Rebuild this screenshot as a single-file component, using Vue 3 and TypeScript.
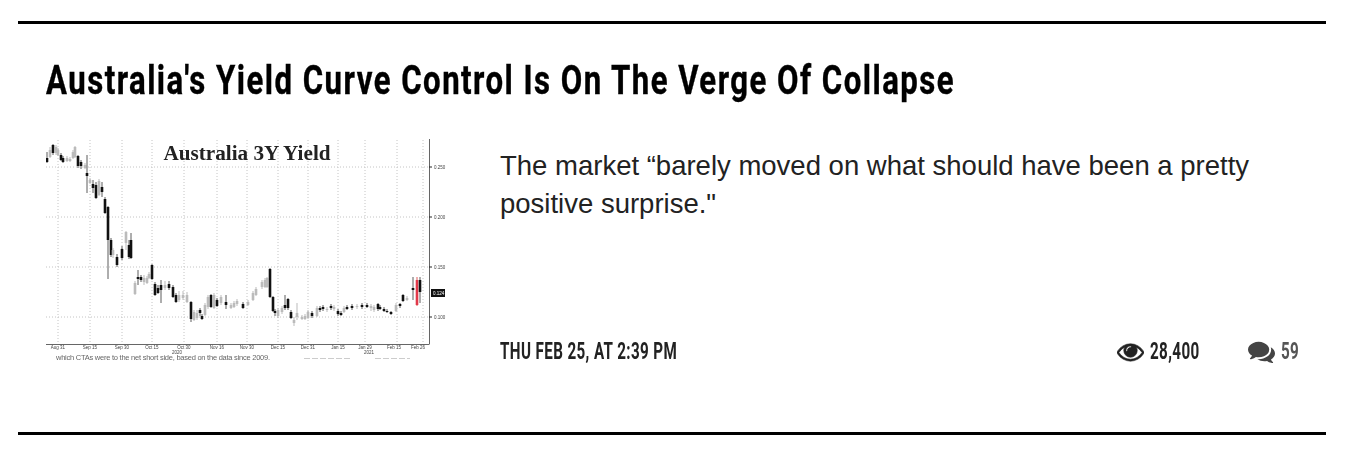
<template>
  <div class="page">
    <article class="post">
      <h2 class="title">Australia's Yield Curve Control Is On The Verge Of Collapse</h2>
      <div class="row">
        <svg class="chart" viewBox="46 139 400 222" width="400" height="222" xmlns="http://www.w3.org/2000/svg">
          <g class="grid">
            <line v-for="y in gridY" :key="'h' + y" x1="46" x2="429" :y1="y" :y2="y" />
            <line v-for="x in gridX" :key="'v' + x" :x1="x" :x2="x" y1="140" y2="344" />
          </g>
          <text x="247" y="159.5" text-anchor="middle" class="chart-title">Australia 3Y Yield</text>
          <g v-for="(c, i) in candles" :key="i">
            <line :x1="c.x" :x2="c.x" :y1="c.wt" :y2="c.wb" :stroke="c.kind === 'd' ? '#333' : c.kind === 'r' ? '#d33' : '#aaa'" stroke-width="0.8" />
            <rect :x="c.x - 1.3" :y="c.top" width="2.6" :height="c.bot - c.top" :fill="c.kind === 'd' ? '#111' : c.kind === 'r' ? '#e2394a' : '#bbb'" />
          </g>
          <line class="axis" x1="429.5" x2="429.5" y1="139" y2="344" />
          <line class="axis" x1="46" x2="429.5" y1="344.5" y2="344.5" />
          <g v-for="t in ticks" :key="t">
            <line x1="429" x2="432" :y1="tickY[t]" :y2="tickY[t]" stroke="#222" />
            <text x="434" :y="tickY[t] + 2" class="tick">{{ t }}</text>
          </g>
          <rect x="431" y="289" width="14" height="8" fill="#111" />
          <text x="433" y="295" class="tick last">0.124</text>
          <text v-for="d in dates" :key="d.t" :x="d.x" y="349" text-anchor="middle" class="tick">{{ d.t }}</text>
          <text x="177" y="354" text-anchor="middle" class="tick">2020</text>
          <text x="369" y="354" text-anchor="middle" class="tick">2021</text>
          <text x="56" y="360" class="cutoff" textLength="214">which CTAs were to the net short side, based on the data since 2009.</text>
          <line class="scrap" x1="304" x2="350" y1="358.5" y2="358.5" />
          <line class="scrap" x1="375" x2="410" y1="358.5" y2="358.5" />
        </svg>
        <div class="body">
          <p class="summary">The market “barely moved on what should have been a pretty positive surprise."</p>
          <div class="meta">
            <span class="date"><span class="squeeze">THU FEB 25, AT 2:39 PM</span></span>
            <div class="stats">
              <span class="stat views">
                <svg class="icon" viewBox="0 0 1792 1792" width="27" height="27"><path fill="#222" stroke="#222" stroke-width="40" d="M1664 960q-152-236-381-353 61 104 61 225 0 185-131.500 316.500t-316.500 131.500-316.500-131.500-131.500-316.500q0-121 61-225-229 117-381 353 133 205 333.500 326.500t434.500 121.500 434.500-121.500 333.500-326.500zm-720-384q0-20-14-34t-34-14q-125 0-214.500 89.500t-89.500 214.500q0 20 14 34t34 14 34-14 14-34q0-86 61-147t147-61q20 0 34-14t14-34zm848 384q0 34-20 69-140 230-376.500 368.500t-499.500 138.500-499.500-139-376.500-368q-20-35-20-69t20-69q140-229 376.500-368t499.500-139 499.500 139 376.500 368q20 35 20 69z"/></svg>
                <span class="num wide">28,400</span>
              </span>
              <span class="stat comments">
                <svg class="icon" viewBox="0 0 1792 1792" width="27" height="27"><path fill="#444" d="M1408 768q0 139-94 257t-256.500 186.500-353.500 68.500q-86 0-176-16-124 88-278 128-36 9-86 16h-3q-11 0-20.500-8t-11.500-21q-1-3-1-6.500t.5-6.500 2-6l2.500-5 3.500-5.500 4-5 4.500-5 4-4.500q5-6 23-25t26-29.500 22.500-29 25-38.500 20.500-44q-124-72-195-177t-71-224q0-139 94-257t256.500-186.500 353.500-68.500 353.500 68.500 256.500 186.500 94 257zm384 256q0 120-71 224.500t-195 176.500q10 24 20.500 44t25 38.500 22.500 29 26 29.500 23 25q1 1 4 4.500t4.500 5 4 5 3.500 5.500l2.500 5 2 6 .5 6.500-1 6.500q-3 14-13 22t-22 7q-50-7-86-16-154-40-278-128-90 16-176 16-271 0-472-132 58 4 88 4 161 0 309-45t264-129q125-92 192-212t67-254q0-77-23-152 129 71 204 178t75 230z"/></svg>
                <span class="num narrow">59</span>
              </span>
            </div>
          </div>
        </div>
      </div>
    </article>
  </div>
</template>

<script setup lang="ts">
interface Candle {
  x: number
  top: number
  bot: number
  wt: number
  wb: number
  kind: string
}

const gridY = [167, 217, 267, 317]
const gridX = [58, 90, 122, 152, 184, 217, 247, 278, 308, 338, 365, 397, 423]
const ticks = ['0.250', '0.200', '0.150', '0.100']
const tickY: Record<string, number> = { '0.250': 167, '0.200': 217, '0.150': 267, '0.100': 317 }

const dates = [
  { t: 'Aug 31', x: 58 }, { t: 'Sep 15', x: 90 }, { t: 'Sep 30', x: 122 }, { t: 'Oct 15', x: 152 },
  { t: 'Oct 30', x: 184 }, { t: 'Nov 16', x: 217 }, { t: 'Nov 30', x: 247 }, { t: 'Dec 15', x: 278 },
  { t: 'Dec 31', x: 308 }, { t: 'Jan 15', x: 338 }, { t: 'Jan 29', x: 365 }, { t: 'Feb 15', x: 394 },
  { t: 'Feb 26', x: 418 },
]

// x, body top, body bottom, wick top, wick bottom, d = dark / l = light / r = red
const raw: [number, number, number, number, number, string][] = [
  [47, 158, 162, 152, 163, 'd'], [50, 150, 157, 147, 158, 'l'], [53, 145, 153, 144, 155, 'd'], [56, 147, 153, 145, 155, 'l'],
  [58, 150, 155, 148, 156, 'l'], [61, 155, 160, 153, 161, 'd'], [63, 158, 162, 156, 163, 'd'], [67, 158, 161, 156, 162, 'l'],
  [70, 159, 161, 157, 162, 'l'], [73, 152, 158, 150, 159, 'l'], [75, 147, 157, 146, 158, 'l'], [78, 156, 166, 155, 168, 'd'],
  [81, 162, 166, 160, 169, 'd'], [85, 165, 168, 163, 169, 'l'], [87, 173, 176, 155, 193, 'd'], [90, 180, 183, 178, 184, 'l'],
  [93, 184, 188, 180, 193, 'd'], [96, 185, 198, 182, 199, 'd'], [99, 181, 195, 179, 196, 'l'], [102, 187, 192, 182, 197, 'd'],
  [105, 199, 213, 197, 214, 'd'], [108, 207, 240, 206, 279, 'd'], [111, 240, 255, 238, 257, 'd'], [113, 250, 255, 248, 258, 'l'],
  [117, 257, 265, 254, 267, 'd'], [122, 249, 258, 246, 260, 'd'], [126, 232, 243, 231, 250, 'l'], [129, 245, 257, 240, 259, 'd'],
  [131, 240, 258, 233, 259, 'd'], [135, 283, 294, 281, 295, 'l'], [138, 277, 279, 270, 285, 'd'], [141, 277, 280, 275, 282, 'd'],
  [144, 278, 282, 275, 285, 'l'], [147, 278, 283, 276, 284, 'l'], [149, 274, 278, 272, 279, 'l'], [152, 265, 279, 264, 280, 'd'],
  [155, 284, 295, 282, 296, 'd'], [158, 288, 293, 285, 294, 'd'], [161, 285, 290, 280, 303, 'd'], [165, 285, 288, 281, 290, 'l'],
  [169, 284, 288, 281, 290, 'd'], [173, 287, 297, 285, 298, 'd'], [176, 295, 302, 293, 303, 'd'], [179, 295, 300, 291, 302, 'l'],
  [183, 295, 298, 291, 300, 'l'], [187, 295, 302, 292, 303, 'l'], [191, 302, 319, 301, 322, 'd'], [194, 312, 320, 310, 321, 'l'],
  [197, 313, 318, 310, 320, 'l'], [200, 310, 313, 308, 316, 'd'], [202, 316, 319, 314, 320, 'd'], [205, 305, 315, 303, 316, 'l'],
  [208, 297, 307, 295, 309, 'l'], [211, 295, 307, 294, 308, 'd'], [214, 295, 308, 293, 309, 'l'], [217, 300, 306, 298, 307, 'd'],
  [221, 297, 303, 295, 305, 'l'], [226, 302, 305, 295, 309, 'd'], [231, 305, 308, 303, 309, 'l'], [234, 303, 307, 301, 308, 'l'],
  [237, 301, 304, 299, 306, 'l'], [243, 304, 308, 302, 309, 'd'], [248, 302, 305, 300, 306, 'l'], [253, 293, 300, 291, 301, 'l'],
  [256, 289, 295, 287, 296, 'l'], [262, 282, 287, 280, 289, 'l'], [265, 280, 287, 278, 288, 'l'], [267, 278, 287, 277, 288, 'l'],
  [270, 269, 297, 268, 298, 'd'], [273, 297, 311, 296, 312, 'd'], [275, 311, 313, 309, 316, 'd'], [278, 310, 316, 308, 318, 'l'],
  [282, 308, 312, 306, 314, 'l'], [285, 305, 308, 295, 310, 'd'], [288, 299, 308, 298, 310, 'd'], [291, 312, 318, 310, 319, 'd'],
  [294, 320, 323, 317, 326, 'l'], [297, 313, 317, 303, 320, 'l'], [302, 317, 319, 315, 320, 'l'], [305, 316, 319, 314, 320, 'l'],
  [308, 312, 318, 310, 319, 'l'], [312, 313, 316, 311, 318, 'd'], [317, 308, 316, 306, 317, 'l'], [320, 308, 310, 306, 312, 'd'],
  [323, 307, 309, 305, 311, 'd'], [327, 309, 310, 307, 312, 'l'], [331, 306, 308, 304, 310, 'd'], [334, 307, 309, 305, 311, 'l'],
  [338, 311, 314, 309, 316, 'd'], [341, 313, 315, 311, 316, 'd'], [344, 308, 312, 306, 313, 'l'], [347, 307, 309, 305, 310, 'd'],
  [352, 306, 308, 304, 310, 'd'], [357, 306, 307, 304, 309, 'l'], [362, 305, 307, 303, 309, 'd'], [367, 305, 307, 303, 308, 'd'],
  [371, 306, 308, 304, 311, 'l'], [374, 307, 310, 305, 312, 'l'], [378, 304, 309, 303, 311, 'd'], [380, 307, 309, 305, 310, 'd'],
  [384, 309, 311, 307, 312, 'd'], [387, 311, 312, 309, 313, 'd'], [391, 312, 314, 311, 315, 'd'], [396, 305, 311, 303, 312, 'l'],
  [400, 304, 306, 303, 308, 'd'], [403, 295, 301, 294, 302, 'd'], [407, 298, 300, 296, 301, 'l'], [413, 288, 290, 277, 300, 'd'],
  [417, 280, 305, 277, 306, 'r'], [420, 280, 292, 277, 303, 'd'],
]

const candles: Candle[] = raw.map(([x, top, bot, wt, wb, kind]) => ({ x, top, bot, wt, wb, kind }))
</script>

<style scoped>
.page {
  padding: 21px 36px 0 18px;
  font-family: "Liberation Sans", Arial, sans-serif;
}

.post {
  height: 414px;
  box-sizing: border-box;
  border-top: 3px solid #000;
  border-bottom: 3px solid #000;
  padding: 0 28px;
  display: flex;
  flex-direction: column;
}

.title {
  margin: 30px 0 0;
  font-family: Roboto, sans-serif;
  font-weight: 700;
  font-size: 41px;
  line-height: 52px;
  color: #000;
  white-space: nowrap;
  transform: scaleX(0.76);
  transform-origin: left center;
  letter-spacing: 1.93px;
  -webkit-text-stroke: 0.4px #000;
}

.row {
  display: flex;
  margin-top: 33px;
}

.chart {
  flex: none;
  margin-right: 54px;
  filter: blur(0.6px);
}

.grid line {
  stroke: #c4c4c4;
  stroke-width: 1;
  stroke-dasharray: 1 2;
}

.axis {
  stroke: #666;
  stroke-width: 1;
}

.scrap {
  stroke: #ccc;
  stroke-width: 1;
  stroke-dasharray: 6 2;
}

.chart-title {
  font-family: "Liberation Serif", serif;
  font-weight: 700;
  font-size: 21.2px;
  fill: #222;
}

.tick {
  font-family: "Liberation Sans", sans-serif;
  font-size: 4.5px;
  fill: #444;
}

.tick.last {
  fill: #fff;
}

.cutoff {
  font-family: "Liberation Sans", sans-serif;
  font-size: 7.5px;
  fill: #666;
}

.body {
  flex: 1;
  min-width: 0;
  display: flex;
  flex-direction: column;
  height: 226px;
}

.summary {
  margin: 8px 0 0;
  font-size: 27.5px;
  line-height: 38px;
  color: #222;
}

.meta {
  margin-top: auto;
  display: flex;
  justify-content: space-between;
  align-items: center;
  height: 27px;
}

.date {
  font-family: Roboto, sans-serif;
  font-weight: 700;
  font-size: 23px;
  color: #222;
  white-space: nowrap;
}

.squeeze {
  display: inline-block;
  transform: scaleX(0.66);
  transform-origin: left center;
  letter-spacing: 0.6px;
}

.stats {
  display: flex;
  align-items: center;
  gap: 48px;
}

.stat {
  display: flex;
  align-items: center;
  gap: 6px;
  font-family: Roboto, sans-serif;
  font-weight: 700;
  font-size: 23px;
}

.num {
  display: inline-block;
  transform: scaleX(0.66);
  transform-origin: left center;
  letter-spacing: 0.6px;
  white-space: nowrap;
}

.wide {
  width: 50px;
}

.narrow {
  width: 17px;
}

.views {
  color: #222;
}

.comments {
  color: #555;
}
</style>
